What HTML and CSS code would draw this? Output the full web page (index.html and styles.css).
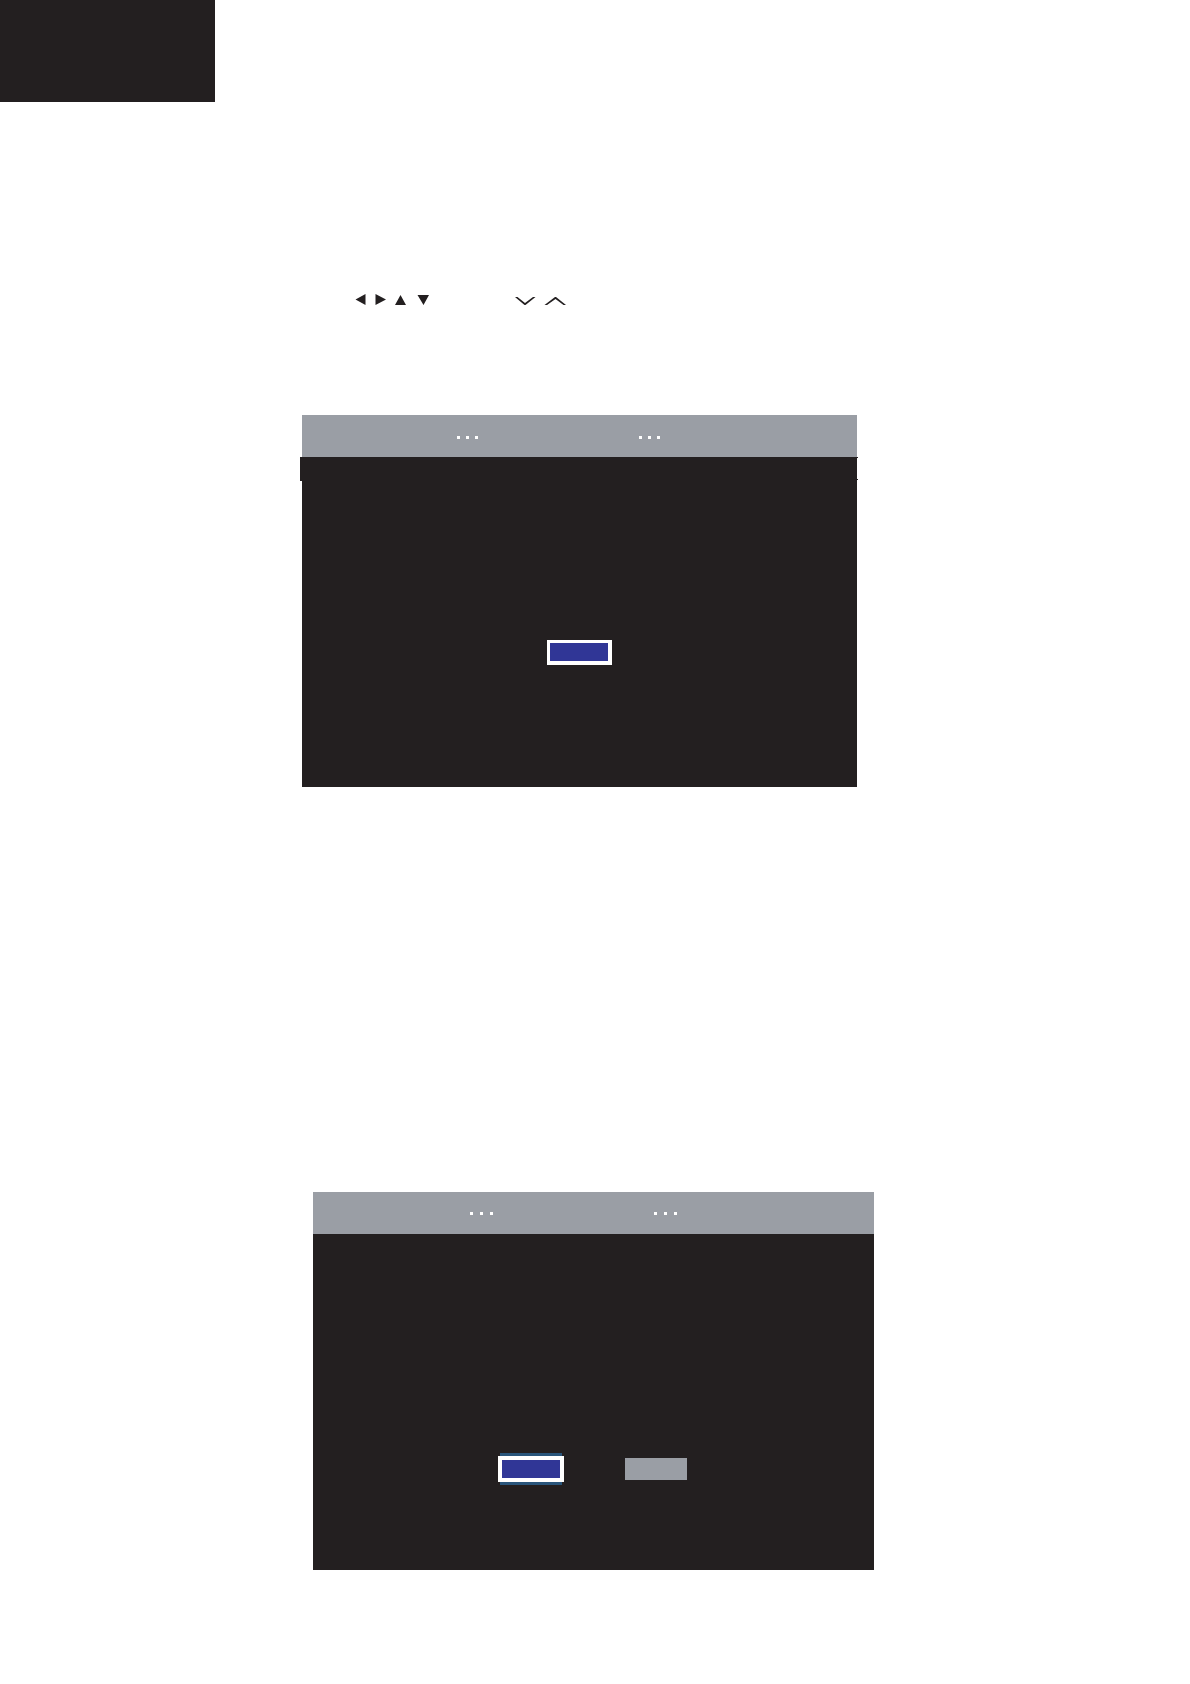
FILE: index.html
```html
<!DOCTYPE html>
<html lang="en">
<head>
    <meta charset="UTF-8">
    <meta name="viewport" content="width=device-width, initial-scale=1.0">
    <title>Display Menu</title>
    <link rel="stylesheet" href="styles.css">
</head>
<body>
    <header class="corner"></header>

    <main>
        <!-- Navigation keys -->
        <div class="keys">
            <svg class="arrows" width="74" height="12" viewBox="0 0 74 12" aria-hidden="true">
                <path d="M-0.500 5.500L9.500 0V11Z M19.500 0L30 5.500L19.500 11Z M39 11L44.500 1L50 11Z M61.500 1H73L67.500 11Z"/>
            </svg>
            <svg class="chevrons" width="52" height="12" viewBox="0 0 52 12" aria-hidden="true">
                <path d="M0 3H2.500L10 9L18 3H20.500L10.500 11H9.500Z M29.500 11L40 3H41L51 11H48.500L40.500 5L32 11Z"/>
            </svg>
        </div>

        <!-- Single button dialog -->
        <section class="panel panel-first">
            <div class="panel-header">
                <div class="dots"><i></i><i></i><i></i></div>
                <div class="dots"><i></i><i></i><i></i></div>
            </div>
            <div class="selected-row"></div>
            <div class="actions">
                <button type="button" class="btn btn-active" aria-label="OK"></button>
            </div>
        </section>

        <!-- Two button dialog -->
        <section class="panel panel-second">
            <div class="panel-header">
                <div class="dots"><i></i><i></i><i></i></div>
                <div class="dots"><i></i><i></i><i></i></div>
            </div>
            <div class="actions">
                <button type="button" class="btn btn-active btn-glow" aria-label="Yes"></button>
                <button type="button" class="btn" aria-label="No"></button>
            </div>
        </section>
    </main>
</body>
</html>
```

FILE: styles.css
```css
* {
    box-sizing: border-box;
}
body {
    margin: 0;
    background-color: #fff;
    font-family: Arial, "Liberation Sans", sans-serif;
}
.corner {
    width: 215px;
    height: 102px;
    background-color: #231f20;
}
main {
    padding: 192px 0 114px;
}
.keys {
    display: flex;
    gap: 85px;
    margin-left: 356px;
}
.keys svg {
    display: block;
    overflow: visible;
    fill: #231f20;
}
.panel {
    background-color: #231f20;
}
.panel-first {
    margin: 109px 333px 0 302px;
    padding-bottom: 122px;
}
.panel-second {
    margin: 405px 316px 0 313px;
    padding-bottom: 88px;
}
.panel-header {
    display: flex;
    align-items: center;
    justify-content: center;
    gap: 161px;
    height: 42px;
    padding: 2px 42px 0 0;
    background-color: #9a9ea5;
}
.dots {
    display: flex;
    gap: 6px;
}
.dots i {
    width: 3px;
    height: 3px;
    background-color: #fff;
}
.panel-second .dots {
    gap: 7px;
}
.panel-second .panel-header {
    padding: 0 40px 0 0;
}
.selected-row {
    position: relative;
    height: 23px;
    margin-right: -1px;
    border-top: 1px solid #231f20;
    border-bottom: 1px solid #231f20;
}
.selected-row::before {
    content: "";
    position: absolute;
    top: -1px;
    left: -2px;
    width: 2px;
    height: 24px;
    background-color: #231f20;
}
.actions {
    display: flex;
    align-items: center;
    justify-content: center;
}
.panel-first .actions {
    padding-top: 160px;
}
.panel-second .actions {
    gap: 61px;
    padding: 222px 2px 0 0;
}
.btn {
    width: 62px;
    height: 22px;
    padding: 0;
    border: none;
    background-color: #9a9ea5;
    cursor: pointer;
}
.btn-active {
    width: 65px;
    height: 25px;
    border: 3px solid #fff;
    border-right-width: 4px;
    border-bottom-width: 4px;
    background-color: #303696;
}
.btn-glow {
    position: relative;
    width: 66px;
    height: 26px;
    border-width: 4px;
}
/* blue edge above and below the button */
.btn-glow::before,
.btn-glow::after {
    content: "";
    position: absolute;
    left: -2px;
    right: -2px;
    height: 3px;
    background-color: #29557b;
}
.btn-glow::before {
    top: -7px;
}
.btn-glow::after {
    bottom: -7px;
}
```
